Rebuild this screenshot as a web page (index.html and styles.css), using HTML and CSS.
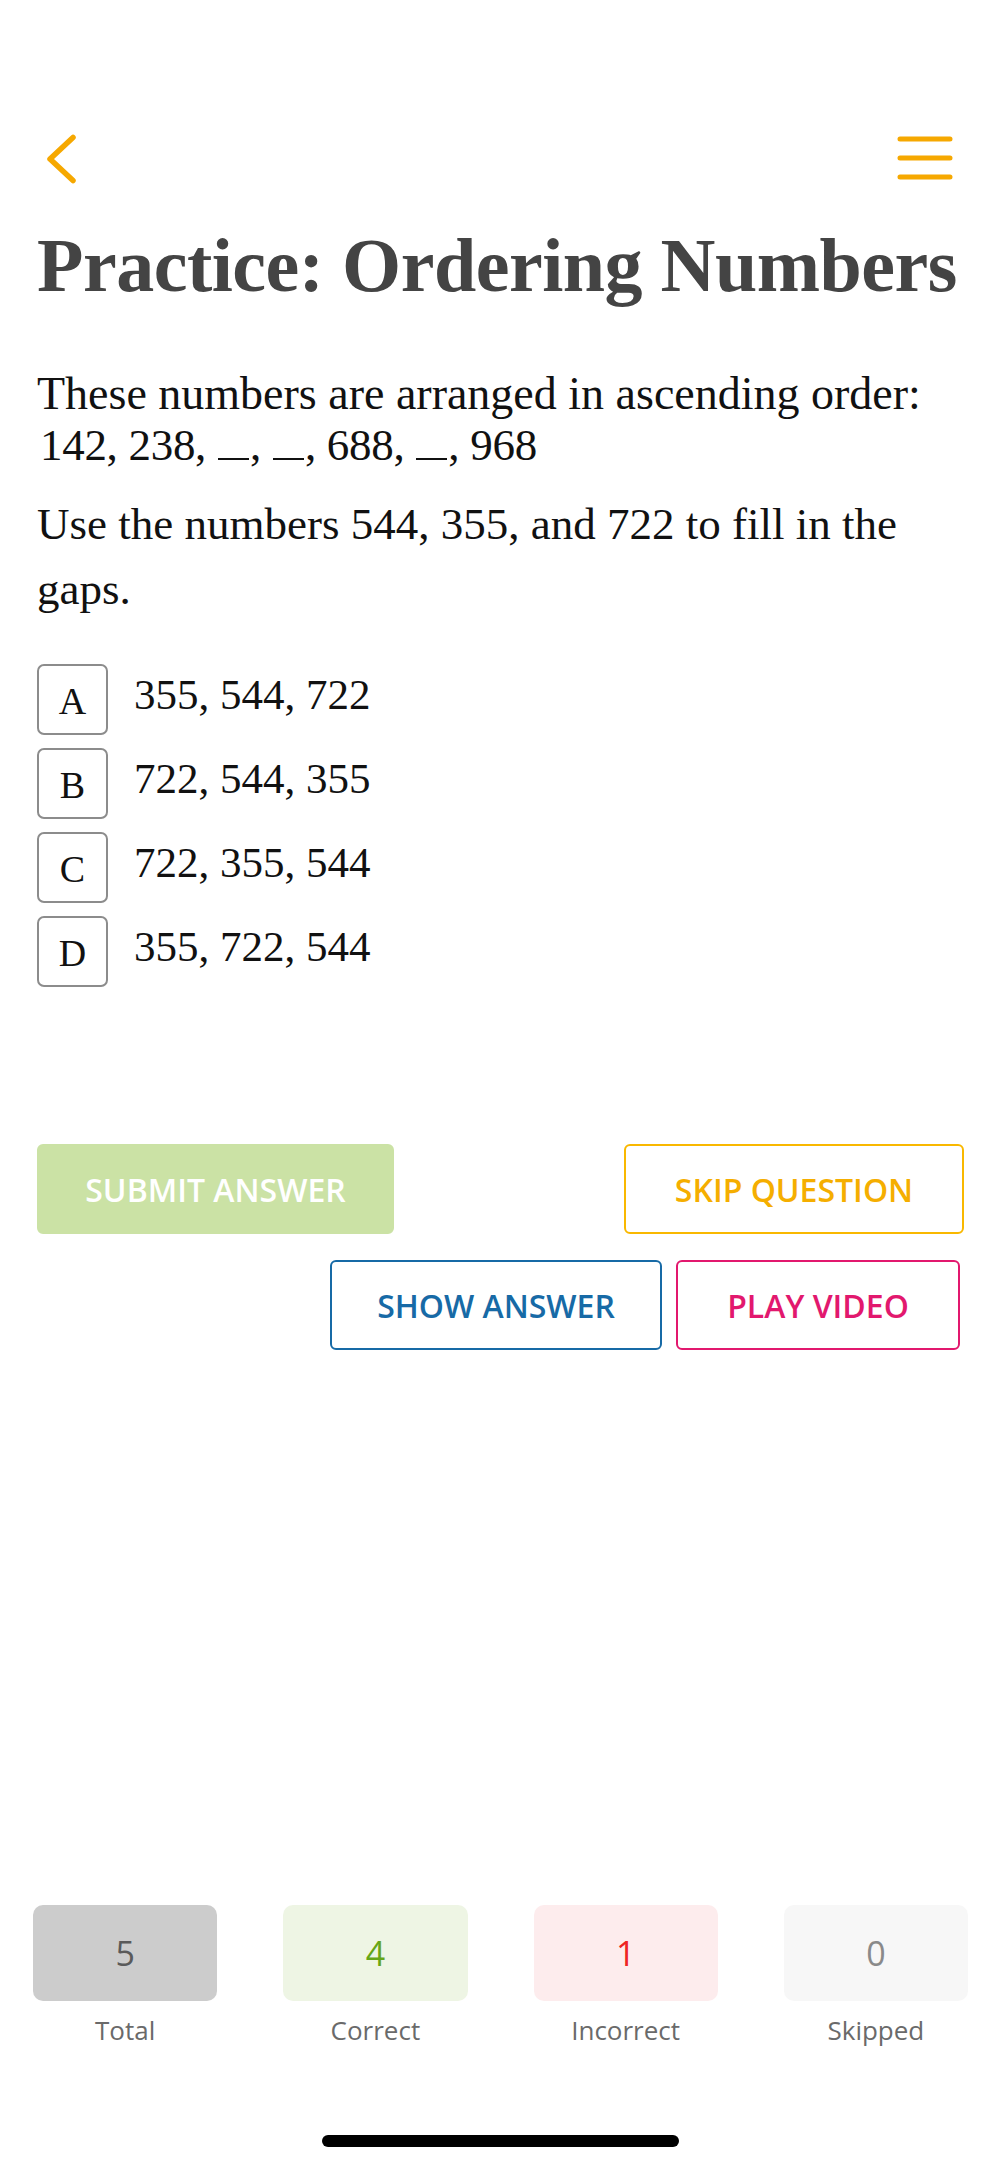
FILE: index.html
```html
<!DOCTYPE html>
<html lang="en">
<head>
<meta charset="utf-8">
<title>Practice: Ordering Numbers</title>
<link rel="stylesheet" href="styles.css">
</head>
<body>
<div class="screen">
  <header class="topbar">
    <svg class="icon-back" width="32" height="50" viewBox="0 0 32 50" aria-label="Back">
      <path d="M28 3.5 L5 25 L28 46.5" fill="none" stroke="#f6a800" stroke-width="5.5" stroke-linecap="round" stroke-linejoin="round"/>
    </svg>
    <svg class="icon-menu" width="56" height="46" viewBox="0 0 56 46" aria-label="Menu">
      <path d="M3 4 H53 M3 23 H53 M3 42 H53" fill="none" stroke="#f6a800" stroke-width="5" stroke-linecap="round"/>
    </svg>
  </header>

  <main class="content">
    <h1 class="title">Practice: Ordering Numbers</h1>

    <p class="q-intro">These numbers are arranged in ascending order:<br><span class="seq">142, 238, <span class="blank"></span>, <span class="blank"></span>, 688, <span class="blank"></span>, 968</span></p>

    <p class="q-text">Use the numbers 544, 355, and 722 to fill in the gaps.</p>

    <ul class="options">
      <li class="option"><span class="opt-key">A</span><span class="opt-text">355, 544, 722</span></li>
      <li class="option"><span class="opt-key">B</span><span class="opt-text">722, 544, 355</span></li>
      <li class="option"><span class="opt-key">C</span><span class="opt-text">722, 355, 544</span></li>
      <li class="option"><span class="opt-key">D</span><span class="opt-text">355, 722, 544</span></li>
    </ul>

    <div class="actions">
      <div class="action-row">
        <button class="btn btn-submit">SUBMIT ANSWER</button>
        <button class="btn btn-skip">SKIP QUESTION</button>
      </div>
      <div class="action-row action-row-end">
        <button class="btn btn-show">SHOW ANSWER</button>
        <button class="btn btn-video">PLAY VIDEO</button>
      </div>
    </div>
  </main>

  <section class="stats">
    <div class="stat"><div class="stat-box stat-total">5</div><div class="stat-label">Total</div></div>
    <div class="stat"><div class="stat-box stat-correct">4</div><div class="stat-label">Correct</div></div>
    <div class="stat"><div class="stat-box stat-incorrect">1</div><div class="stat-label">Incorrect</div></div>
    <div class="stat"><div class="stat-box stat-skipped">0</div><div class="stat-label">Skipped</div></div>
  </section>

  <div class="home-bar"></div>
</div>
</body>
</html>
```

FILE: styles.css
```css
* { box-sizing: border-box; }

html, body {
  margin: 0;
  padding: 0;
  background: #ffffff;
}

body {
  font-family: "Liberation Serif", "Times New Roman", serif;
  color: #111111;
}

.screen {
  width: 1001px;
  height: 2167px;
  display: flex;
  flex-direction: column;
  overflow: hidden;
}

.topbar {
  display: flex;
  justify-content: space-between;
  align-items: flex-start;
  padding: 134px 48px 0 45px;
  height: 184px;
}

.icon-back, .icon-menu { display: block; }
.icon-menu { margin-top: 1px; }

.content {
  padding: 0 37px;
}

.title {
  margin: 38px 0 0;
  font-family: "Liberation Serif", "Times New Roman", serif;
  font-weight: 700;
  font-size: 76px;
  line-height: 87px;
  color: #444444;
  letter-spacing: -0.5px;
  white-space: nowrap;
}

.q-intro {
  margin: 59px 0 0;
  font-size: 46px;
  line-height: 51px;
}

.seq {
  font-size: 45px;
  padding-left: 3px;
  letter-spacing: -0.3px;
}

.blank {
  display: inline-block;
  width: 31px;
  height: 2px;
  background: #111111;
  vertical-align: baseline;
  margin: 0 1px;
}

.q-text {
  margin: 21px 0 0;
  font-size: 45px;
  line-height: 65px;
}

.options {
  list-style: none;
  margin: 42px 0 0;
  padding: 0;
  display: flex;
  flex-direction: column;
  gap: 13px;
}

.option {
  display: flex;
  align-items: center;
  gap: 26px;
  height: 71px;
}

.opt-key {
  width: 71px;
  height: 71px;
  border: 2px solid #8c8c8c;
  border-radius: 7px;
  display: flex;
  align-items: center;
  justify-content: center;
  font-size: 38px;
  padding-top: 2px;
}

.opt-text {
  font-size: 43px;
  padding-bottom: 10px;
}

.actions {
  margin-top: 157px;
  display: flex;
  flex-direction: column;
  gap: 26px;
}

.action-row {
  display: flex;
  justify-content: space-between;
  padding-right: 0;
}

.action-row-end {
  justify-content: flex-end;
  gap: 14px;
  padding-right: 4px;
}

.btn {
  height: 90px;
  border-radius: 6px;
  border: 2.5px solid transparent;
  background: #ffffff;
  font-family: "Open Sans", "Noto Sans", sans-serif;
  font-weight: 600;
  font-size: 32px;
  letter-spacing: 0;
  display: flex;
  align-items: center;
  justify-content: center;
  padding: 0;
}

.btn-submit {
  width: 357px;
  background: #cbe2a5;
  border-color: #cbe2a5;
  color: #ffffff;
}

.btn-skip {
  width: 340px;
  border-color: #f9b800;
  color: #f5ae00;
}

.btn-show {
  width: 332px;
  border-color: #176aa6;
  color: #176aa6;
}

.btn-video {
  width: 284px;
  border-color: #e2186e;
  color: #e2186e;
}

.stats {
  margin-top: auto;
  padding: 0 33px;
  display: grid;
  grid-template-columns: repeat(4, 1fr);
  column-gap: 66px;
}

.stat {
  display: flex;
  flex-direction: column;
  align-items: center;
}

.stat-box {
  width: 100%;
  height: 96px;
  border-radius: 10px;
  display: flex;
  align-items: center;
  justify-content: center;
  font-family: "Open Sans", "Noto Sans", sans-serif;
  font-size: 34px;
}

.stat-total { background: #cccccc; color: #5a5a5a; }
.stat-correct { background: #eef5e4; color: #66a618; }
.stat-incorrect { background: #fdeced; color: #ee2424; }
.stat-skipped { background: #f7f7f7; color: #8a8a8a; }

.stat-label {
  margin-top: 12px;
  font-family: "Open Sans", "Noto Sans", sans-serif;
  font-size: 26px;
  line-height: 34px;
  color: #6a6a6a;
}

.home-bar {
  width: 357px;
  height: 12px;
  border-radius: 6px;
  background: #000000;
  margin: 88px auto 20px;
}
```
